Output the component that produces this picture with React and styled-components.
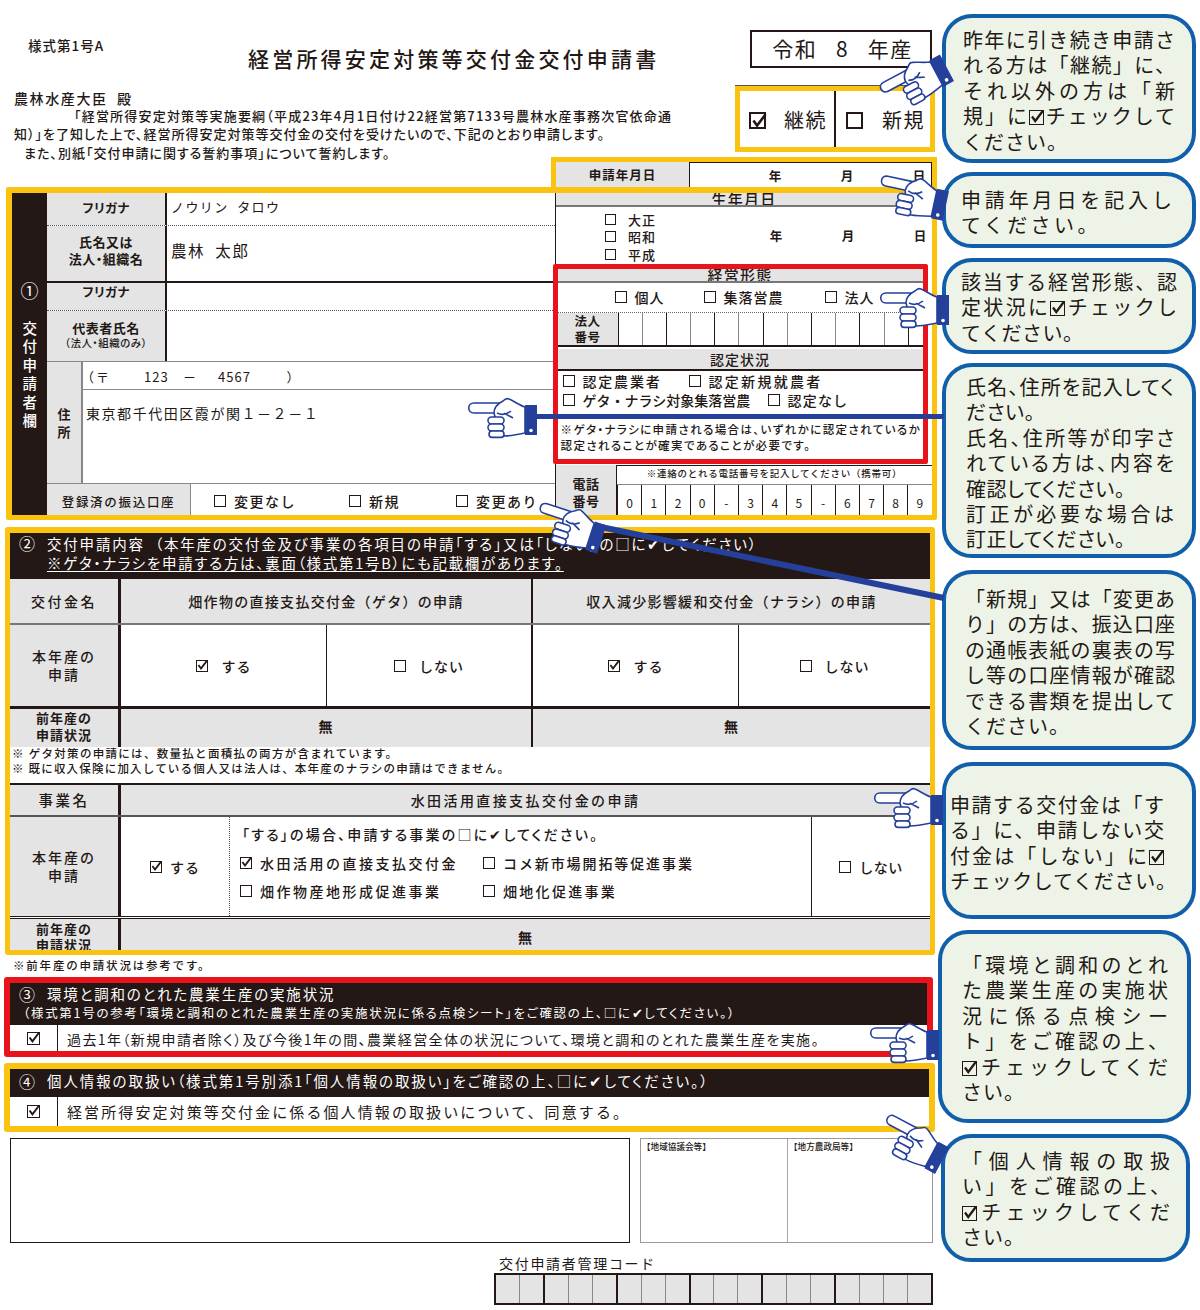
import React from 'react';
import styled, { createGlobalStyle } from 'styled-components';

const INK = '#231815';
const GRAY = '#e4e4e4';
const AMBER = '#f9c30f';
const RED = '#e9141b';
const NAVY = '#25409b';

const Global = createGlobalStyle`
  html, body { margin: 0; padding: 0; background: #fff; }
  #root { width: 1200px; height: 1310px; overflow: hidden; }
  * { box-sizing: border-box; }
`;

const Page = styled.div`
  position: relative;
  display: flex;
  width: 1200px;
  height: 1310px;
  color: ${INK};
  font-family: "Noto Sans CJK JP", "Liberation Sans", sans-serif;
  line-height: 1.2;
`;
const FormColumn = styled.div`
  width: 942px;
  flex: none;
  display: flex;
  flex-direction: column;
  align-items: flex-start;
  font-weight: 500;
`;
const CalloutColumn = styled.div`
  width: 258px;
  flex: none;
  display: flex;
  flex-direction: column;
  align-items: flex-start;
`;

/* ---------- callouts ---------- */
const Callout = styled.div`
  margin-top: ${p => p.$top}px;
  margin-left: ${p => p.$ml || 0}px;
  width: ${p => p.$w || 254}px;
  height: ${p => p.$h}px;
  padding: ${p => p.$pt}px 0 0 ${p => p.$pl}px;
  background: #edf4e7;
  border: 4px solid #115faa;
  border-radius: 30px;
  flex: none;
  font-size: 20px;
  font-feature-settings: ${p => (p.$palt ? '"palt"' : 'normal')};
`;
const L = styled.div`
  width: ${p => p.$w || 210}px;
  height: 25.4px;
  line-height: 25.4px;
  white-space: ${p => (p.$free ? 'nowrap' : 'normal')};
  text-align: justify;
  text-align-last: ${p => (p.$free ? 'left' : 'justify')};
  letter-spacing: ${p => (p.$free ? `${p.$ls ?? 1}px` : '0')};
`;

/* ---------- checkbox ---------- */
const BoxFrame = styled.span`
  position: relative;
  display: inline-block;
  flex: none;
  width: ${p => p.$s}px;
  height: ${p => p.$s}px;
  border: ${p => (p.$s > 16 ? 2 : 1.5)}px solid ${INK};
  vertical-align: -1px;
  background: ${p => (p.$clear ? 'transparent' : '#fff')};
`;
const Tick = styled.svg`
  position: absolute;
  left: -1px;
  top: -2px;
  overflow: visible;
`;
const Check = ({ on, s = 12, clear }) => (
  <BoxFrame $s={s} $clear={clear}>
    {on && (
      <Tick width={s} height={s} viewBox="0 0 12 12">
        <path d="M2.4 6 L5 9.6 L11 1.6" fill="none" stroke={INK} strokeWidth="1.8" />
      </Tick>
    )}
  </BoxFrame>
);
const Opt = styled.span`
  display: inline-flex;
  align-items: center;
  flex: none;
  width: ${p => (p.$w ? `${p.$w}px` : 'auto')};
  gap: ${p => p.$gap || 8}px;
  font-size: ${p => p.$fs || 14}px;
  letter-spacing: ${p => p.$ls ?? 1}px;
  white-space: nowrap;
`;

/* ---------- top of the form ---------- */
const TopRow = styled.div`
  display: flex;
  height: 157px;
  width: 942px;
  flex: none;
`;
const Intro = styled.div`
  width: 735px;
  flex: none;
  display: flex;
  flex-direction: column;
`;
const FormNo = styled.div`
  margin: 37px 0 0 28px;
  height: 16px;
  line-height: 16px;
  font-size: 13.5px;
  letter-spacing: 1px;
`;
const Title = styled.h1`
  margin: -8px 0 0 248px;
  height: 28px;
  line-height: 26px;
  font-size: 21px;
  font-weight: 500;
  letter-spacing: 3.2px;
  white-space: nowrap;
`;
const Addressee = styled.div`
  margin: 18px 0 0 14px;
  height: 18px;
  line-height: 18px;
  font-size: 14px;
  letter-spacing: 1.6px;
  white-space: pre;
`;
const IntroLine = styled.div`
  padding-left: ${p => p.$pl}px;
  height: ${p => p.$h || 18}px;
  line-height: ${p => p.$h || 18}px;
  font-size: 13px;
  letter-spacing: ${p => p.$ls}px;
  white-space: nowrap;
  font-feature-settings: "palt";
`;
const TopRight = styled.div`
  width: 207px;
  flex: none;
  display: flex;
  flex-direction: column;
`;
const YearBox = styled.div`
  margin: 30px 0 0 15px;
  width: 182px;
  height: 38px;
  border: 2px solid ${INK};
  padding-left: 3px;
  display: flex;
  align-items: center;
  justify-content: center;
  font-size: 21px;
  font-weight: 400;
  letter-spacing: 1.5px;
  white-space: pre;
`;
const ContinueFrame = styled.div`
  margin-top: 18px;
  width: 200px;
  height: 66px;
  border: 5px solid ${AMBER};
  box-shadow: 0 -1px 0 #555;
  display: flex;
`;
const ContinueCell = styled.div`
  display: flex;
  align-items: center;
  flex: none;
  width: ${p => p.$w}px;
  padding: 2px 0 0 ${p => p.$pl}px;
  gap: ${p => p.$gap}px;
  border-left: ${p => (p.$rule ? `2px solid ${INK}` : 'none')};
  font-size: 20px;
  font-weight: 400;
  letter-spacing: 1.5px;
`;
const DateFrame = styled.div`
  position: relative;
  z-index: 2;
  margin: 0 0 -6px 551px;
  width: 386px;
  height: 36px;
  flex: none;
  border: 5px solid ${AMBER};
  border-bottom-width: 6px;
  display: flex;
`;
const DateLabel = styled.div`
  width: 134px;
  flex: none;
  background: ${GRAY};
  border-right: 1.5px solid ${INK};
  display: flex;
  align-items: center;
  justify-content: center;
  font-size: 12.5px;
  font-weight: 700;
  letter-spacing: 1px;
`;
const Ymd = styled.div`
  display: flex;
  flex: 1 1 0;
  min-width: 0;
  align-items: center;
  padding-left: ${p => p.$pl}px;
  font-size: 12.5px;
  font-weight: 700;
`;
const DateFields = styled(Ymd)`
  border-top: 1.5px solid ${INK};
  border-right: 1.5px solid ${INK};
`;
const YmdPart = styled.span`
  width: 72px;
  flex: none;
  text-align: center;
`;
const YmdParts = () => (
  <>
    <YmdPart>年</YmdPart>
    <YmdPart>月</YmdPart>
    <YmdPart>日</YmdPart>
  </>
);

/* ---------- section frames ---------- */
const ApplicantFrame = styled.section`
  margin-left: 6px;
  width: 931px;
  height: 333px;
  flex: none;
  border: 5px solid ${AMBER};
  border-top-width: 6px;
  border-left-width: 6px;
  border-radius: 2px;
  display: flex;
`;
const Spine = styled.div`
  width: 35px;
  flex: none;
  background: ${INK};
  color: #fff;
  display: flex;
  flex-direction: column;
  align-items: center;
  justify-content: center;
  gap: 20px;
  padding-top: 4px;
`;
const SpineNo = styled.div`
  font-size: 18px;
  font-weight: 400;
`;
const SpineText = styled.div`
  writing-mode: vertical-rl;
  font-size: 14.5px;
  font-weight: 500;
  letter-spacing: 4px;
`;
const LeftBlock = styled.div`
  width: 508px;
  flex: none;
  display: flex;
  flex-direction: column;
`;
const NameRow = styled.div`
  display: flex;
  height: ${p => p.$h}px;
  flex: none;
  border-bottom: ${p =>
    p.$line === 'dash' ? '1px dotted #555' : p.$line === 'solid' ? `2px solid ${INK}` : '1.5px solid #888'};
`;
const NameLabel = styled.div`
  width: 120px;
  flex: none;
  background: ${GRAY};
  border-right: 2px solid ${INK};
  display: flex;
  flex-direction: column;
  align-items: center;
  justify-content: center;
  padding-bottom: ${p => p.$pb || 0}px;
  text-align: center;
  font-size: ${p => p.$fs || 12.5}px;
  line-height: 17px;
  font-weight: 700;
  letter-spacing: 0.5px;
  font-feature-settings: "palt";
`;
const NameSub = styled.span`
  font-size: 10.5px;
  line-height: 14px;
  font-weight: 500;
  white-space: nowrap;
`;
const NameValue = styled.div`
  flex: 1;
  display: flex;
  align-items: center;
  padding: 0 0 ${p => p.$pb || 0}px 4px;
  white-space: pre;
  font-size: ${p => p.$fs}px;
  font-weight: 400;
  letter-spacing: ${p => p.$ls || 0}px;
`;
const AddressRow = styled.div`
  display: flex;
  height: 122px;
  flex: none;
  border-bottom: 1.5px solid #888;
`;
const AddressLabel = styled.div`
  width: 36px;
  flex: none;
  background: ${GRAY};
  border-right: 2px solid #888;
  display: flex;
  flex-direction: column;
  align-items: center;
  justify-content: center;
  font-size: 13px;
  line-height: 18px;
  font-weight: 700;
`;
const AddressBody = styled.div`
  flex: 1;
  display: flex;
  flex-direction: column;
`;
const Postal = styled.div`
  height: 28px;
  flex: none;
  border-bottom: 1.5px solid #888;
  padding: 2px 0 0 4px;
  display: flex;
  align-items: center;
  font-size: 13px;
  font-weight: 400;
  letter-spacing: 1px;
  font-feature-settings: "palt";
`;
const PostalPart = styled.span`
  width: ${p => p.$w}px;
  flex: none;
`;
const AddressText = styled.div`
  padding: 12px 0 0 3px;
  font-size: 14px;
  font-weight: 400;
  letter-spacing: 1.55px;
  line-height: 22px;
`;
const BankRow = styled.div`
  display: flex;
  flex: 1;
`;
const BankLabel = styled.div`
  width: 144px;
  flex: none;
  background: ${GRAY};
  display: flex;
  align-items: center;
  justify-content: center;
  padding-top: 4px;
  font-size: 12.5px;
  letter-spacing: 1.7px;
  border-right: 1px solid #888;
`;
const OptionRow = styled.div`
  display: flex;
  align-items: center;
  padding: ${p => p.$pad || 0}px 0 0 ${p => p.$pl || 0}px;
  height: ${p => (p.$h ? `${p.$h}px` : 'auto')};
  flex: ${p => (p.$h ? 'none' : '1')};
`;

const RightBlock = styled.div`
  width: 377px;
  flex: none;
  display: flex;
  flex-direction: column;
  border-left: 1.5px solid ${INK};
`;
const ClippedHeading = styled.div`
  height: ${p => p.$h}px;
  flex: none;
  overflow: hidden;
  background: ${GRAY};
  border-bottom: 2px solid #777;
  text-align: center;
  font-size: 15px;
  font-weight: 500;
  line-height: ${p => p.$h - 3}px;
  letter-spacing: 1.2px;
`;
const EraRow = styled.div`
  display: flex;
  height: 57px;
  flex: none;
`;
const EraList = styled.div`
  width: 134px;
  flex: none;
  padding: 4px 0 0 49px;
  display: flex;
  flex-direction: column;
`;
const EraItem = styled.div`
  display: flex;
  align-items: center;
  gap: 12px;
  height: ${p => p.$h}px;
  font-size: 13px;
  letter-spacing: 1px;
`;
const StatusFrame = styled.div`
  margin-left: -3.5px;
  width: 375px;
  height: 200px;
  flex: none;
  border: 5px solid ${RED};
  border-radius: 2px;
  display: flex;
  flex-direction: column;
  background: #fff;
`;
const NumberRow = styled.div`
  display: flex;
  height: 35px;
  flex: none;
  border-bottom: 2px solid ${INK};
  border-top: 1px dotted #666;
`;
const SmallLabel = styled.div`
  width: ${p => p.$w}px;
  flex: none;
  background: ${GRAY};
  display: flex;
  flex-direction: column;
  align-items: center;
  justify-content: center;
  padding-top: ${p => p.$pt || 0}px;
  font-size: ${p => p.$fs}px;
  line-height: ${p => p.$lh}px;
  font-weight: 700;
  letter-spacing: 0.6px;
`;
const Digit = styled.div`
  width: ${p => p.$w}px;
  flex: none;
  border-left: ${p => p.$lw || 1.5}px solid ${p => p.$tone || INK};
  display: flex;
  align-items: center;
  justify-content: center;
  padding-top: ${p => p.$pt || 0}px;
  font-size: 12px;
  font-weight: 400;
`;
const HeadingGap = styled.div`
  margin-top: 2px;
  height: 22px;
  flex: none;
  background: ${GRAY};
  border-bottom: 2px solid ${INK};
  text-align: center;
  font-size: 14px;
  font-weight: 500;
  line-height: 21px;
  letter-spacing: 1px;
`;
const StatusOptions = styled.div`
  padding: 1px 0 0 5px;
  display: flex;
  flex-direction: column;
`;
const StatusNote = styled.div`
  margin-top: 12px;
  padding-left: 3px;
  font-size: 11.5px;
  line-height: 16px;
  letter-spacing: ${p => p.$ls}px;
  white-space: nowrap;
  font-feature-settings: "palt";
`;
const PhoneRow = styled.div`
  display: flex;
  flex: 1;
  margin-top: 1px;
`;
const PhoneBody = styled.div`
  flex: 1;
  display: flex;
  flex-direction: column;
  border-left: 1px solid ${INK};
`;
const PhoneNote = styled.div`
  height: 20px;
  flex: none;
  text-align: center;
  font-size: 9.5px;
  line-height: 14px;
  border-bottom: 1.5px solid #888;
  border-top: 1.5px solid ${INK};
  letter-spacing: 0.75px;
`;
const PhoneDigits = styled.div`
  flex: 1;
  display: flex;
`;

/* ---------- section 2 ---------- */
const ApplyFrame = styled.section`
  margin: 7px 0 0 5px;
  width: 930px;
  height: 428px;
  flex: none;
  border: 5px solid ${AMBER};
  border-top-width: 6px;
  border-radius: 3px;
  display: flex;
  flex-direction: column;
  overflow: hidden;
`;
const Banner = styled.div`
  height: ${p => p.$h}px;
  flex: none;
  background: ${INK};
  color: #fff;
  display: flex;
  flex-direction: column;
  justify-content: center;
  padding: 0 0 ${p => p.$pb ?? 3}px ${p => p.$pl || 9}px;
  font-weight: 400;
`;
const BannerLine = styled.div`
  display: flex;
  align-items: center;
  padding-left: ${p => p.$pl || 0}px;
  font-size: ${p => p.$fs || 14}px;
  line-height: ${p => p.$lh || 19}px;
  letter-spacing: ${p => p.$ls ?? 0.6}px;
  white-space: pre;
  font-feature-settings: "palt";
  text-decoration: ${p => (p.$under ? 'underline' : 'none')};
  text-underline-offset: 2px;
`;
const BannerNo = styled.span`
  width: 28px;
  flex: none;
  font-size: 16px;
  letter-spacing: 0;
`;
const Row = styled.div`
  display: grid;
  grid-template-columns: ${p => p.$cols};
  height: ${p => (p.$h ? `${p.$h}px` : 'auto')};
  flex: ${p => (p.$h ? 'none' : '1')};
  border-bottom: ${p => p.$bb || 'none'};
`;
const Cell = styled.div`
  grid-column: span ${p => p.$span || 1};
  background: ${p => (p.$gray ? GRAY : '#fff')};
  border-left: ${p => p.$left || 'none'};
  display: flex;
  align-items: center;
  justify-content: center;
  text-align: center;
  flex-direction: ${p => (p.$stack ? 'column' : 'row')};
  padding-bottom: ${p => p.$pb || 0}px;
  padding-top: ${p => p.$pt || 0}px;
  font-size: ${p => p.$fs || 14}px;
  font-weight: ${p => p.$fw || 500};
  letter-spacing: ${p => p.$ls ?? 1}px;
  line-height: ${p => p.$lh || 18}px;
  white-space: nowrap;
`;
const Notes = styled.div`
  height: 39px;
  flex: none;
  border-bottom: 2px solid ${INK};
  padding: 0 0 0 2px;
  font-size: 11.5px;
  line-height: 15px;
`;
const NoteLine = styled.div`
  letter-spacing: ${p => p.$ls}px;
  white-space: pre;
`;
const ListCell = styled.div`
  border-left: 1px dotted #555;
  padding: 7px 0 0 10px;
`;
const ListLead = styled.div`
  padding-left: 2px;
  font-size: 14px;
  line-height: 20px;
  letter-spacing: 2.2px;
  white-space: nowrap;
  font-feature-settings: "palt";
`;
const ListGrid = styled.div`
  margin-top: 5px;
  display: grid;
  grid-template-columns: 243px 300px;
  grid-auto-rows: 28px;
  align-items: center;
`;
const OutsideNote = styled.div`
  margin: 1px 0 0 13px;
  height: 21px;
  line-height: 14px;
  padding-top: 2px;
  font-size: 11.5px;
  letter-spacing: 1.8px;
`;

/* ---------- sections 3 and 4 ---------- */
const ConfirmFrame = styled.section`
  margin: ${p => p.$top}px 0 0 4px;
  width: ${p => p.$w}px;
  height: ${p => p.$h}px;
  flex: none;
  border: 6px solid ${p => p.$tone};
  border-radius: 3px;
  display: flex;
  flex-direction: column;
  overflow: hidden;
`;
const ConfirmRow = styled.div`
  flex: 1;
  display: flex;
  align-items: center;
  background: #fff;
`;
const ConfirmCheck = styled.div`
  width: 48px;
  align-self: stretch;
  flex: none;
  display: flex;
  align-items: center;
  justify-content: center;
  border-right: 1.5px solid ${INK};
`;
const ConfirmText = styled.div`
  padding: ${p => p.$pt || 0}px 0 0 ${p => p.$pl}px;
  font-size: ${p => p.$fs}px;
  font-weight: 400;
  letter-spacing: ${p => p.$ls}px;
  white-space: nowrap;
  font-feature-settings: ${p => (p.$palt ? '"palt"' : 'normal')};
`;

/* ---------- bottom ---------- */
const BottomRow = styled.div`
  margin: 6px 0 0 10px;
  display: flex;
  gap: 10px;
  height: 105px;
  flex: none;
`;
const MemoBox = styled.div`
  width: 620px;
  border: 1.5px solid ${INK};
`;
const OfficeBox = styled.div`
  width: 293px;
  border: 1.5px solid #999;
  display: flex;
`;
const OfficeCell = styled.div`
  width: ${p => p.$w}px;
  flex: none;
  border-left: ${p => (p.$rule ? '1px solid #aaa' : 'none')};
  padding: 1px 0 0 1px;
  font-size: 8.6px;
  line-height: 12px;
  white-space: nowrap;
`;
const CodeLabel = styled.div`
  margin: 12px 0 0 499px;
  height: 18px;
  line-height: 16px;
  font-size: 14px;
  font-weight: 400;
  letter-spacing: 1.7px;
  white-space: nowrap;
`;
const CodeGrid = styled.div`
  margin-left: 494px;
  width: 439px;
  height: 32px;
  flex: none;
  display: flex;
  border: 2px solid ${INK};
  background: ${GRAY};
`;
const CodeCell = styled.div`
  flex: 1;
  border-left: ${p => (p.$first ? 'none' : p.$major ? `2px solid ${INK}` : '1px solid #888')};
`;

/* ---------- overlays ---------- */
const Leaders = styled.svg`
  position: absolute;
  left: 0;
  top: 0;
  pointer-events: none;
  z-index: 5;
`;
const HandSvg = styled.svg`
  position: absolute;
  width: 70px;
  height: 40px;
  overflow: visible;
  pointer-events: none;
  z-index: 6;
`;
const Hand = ({ tx, ty, a = 0 }) => {
  const r = (a * Math.PI) / 180;
  const dx = -35, dy = -10;
  const rx = dx * Math.cos(r) - dy * Math.sin(r);
  const ry = dx * Math.sin(r) + dy * Math.cos(r);
  const cx = tx - rx, cy = ty - ry;
  return (
    <HandSvg
      viewBox="0 0 70 40"
      style={{ left: cx - 35, top: cy - 20, transform: `rotate(${a}deg)` }}
    >
      <g fill="#fff" stroke={NAVY} strokeWidth="1.6" strokeLinejoin="round">
        <path d="M34 5 L6 5 C-1 5 -1 15 6 15 L30 15 Z" />
        <path d="M26 15 C26 9 31 5 35 3 C37 1 39 0 41 1 C46 3 51 7 57 9 L57 35 C50 36.5 43 38 36 38 L30 30 Z" />
        <rect x="20" y="19" width="16" height="7" rx="3.4" />
        <rect x="20" y="26" width="16" height="7" rx="3.4" />
        <rect x="21" y="33" width="15" height="6.4" rx="3.2" />
        <path d="M29 15 C33 17 38 17 43 13 M36 15 C38 17 42 18 45 20" fill="none" />
      </g>
      <rect x="57" y="7" width="12" height="30" fill={NAVY} />
      <circle cx="63" cy="32.5" r="1.8" fill="#fff" />
    </HandSvg>
  );
};

const SIX = '108px 208px 205px 207px 1fr';
const leftHeavy = `3px solid ${INK}`;
const leftMid = `2.5px solid ${INK}`;
const leftThin = `1.5px solid ${INK}`;

const numberDigits = Array.from({ length: 13 });
const phoneDigits = ['0', '1', '2', '0', '-', '3', '4', '5', '-', '6', '7', '8', '9'];
const codeGroups = [2, 3, 3, 3, 3, 4];

export default function App() {
  return (
    <Page>
      <Global />
      <FormColumn>
        <TopRow>
          <Intro>
            <FormNo>様式第1号A</FormNo>
            <Title>経営所得安定対策等交付金交付申請書</Title>
            <Addressee>農林水産大臣  殿</Addressee>
            <IntroLine $pl={74} $ls={1.2}>「経営所得安定対策等実施要綱（平成23年4月1日付け22経営第7133号農林水産事務次官依命通</IntroLine>
            <IntroLine $pl={14} $ls={1}>知）」を了知した上で、経営所得安定対策等交付金の交付を受けたいので、下記のとおり申請します。</IntroLine>
            <IntroLine $pl={24} $ls={1} $h={19}>また、別紙「交付申請に関する誓約事項」について誓約します。</IntroLine>
          </Intro>
          <TopRight>
            <YearBox>令和   8   年産</YearBox>
            <ContinueFrame>
              <ContinueCell $w={94} $pl={9} $gap={18}><Check on s={17} />継続</ContinueCell>
              <ContinueCell $w={96} $rule $pl={10} $gap={19}><Check s={17} />新規</ContinueCell>
            </ContinueFrame>
          </TopRight>
        </TopRow>

        <DateFrame>
          <DateLabel>申請年月日</DateLabel>
          <DateFields $pl={49}><YmdParts /></DateFields>
        </DateFrame>

        <ApplicantFrame>
          <Spine>
            <SpineNo>①</SpineNo>
            <SpineText>交付申請者欄</SpineText>
          </Spine>
          <LeftBlock>
            <NameRow $h={33} $line="dash">
              <NameLabel $pb={4}>フリガナ</NameLabel>
              <NameValue $fs={13} $ls={1.4} $pb={4}>ノウリン  タロウ</NameValue>
            </NameRow>
            <NameRow $h={57} $line="solid">
              <NameLabel $fs={13} $pb={7}>氏名又は<br />法人・組織名</NameLabel>
              <NameValue $fs={15.5} $ls={1.6} $pb={7}>農林  太郎</NameValue>
            </NameRow>
            <NameRow $h={28} $line="dash">
              <NameLabel $pb={11}>フリガナ</NameLabel>
              <NameValue $fs={13} />
            </NameRow>
            <NameRow $h={51} $line="gray">
              <NameLabel $fs={13} $pb={4}>代表者氏名<NameSub>（法人・組織のみ）</NameSub></NameLabel>
              <NameValue $fs={13} />
            </NameRow>
            <AddressRow>
              <AddressLabel>住<br />所</AddressLabel>
              <AddressBody>
                <Postal>
                  <PostalPart $w={10}>（</PostalPart>
                  <PostalPart $w={47}>〒</PostalPart>
                  <PostalPart $w={39}>123</PostalPart>
                  <PostalPart $w={35}>－</PostalPart>
                  <PostalPart $w={69}>4567</PostalPart>
                  <PostalPart $w={14}>）</PostalPart>
                </Postal>
                <AddressText>東京都千代田区霞が関１－２－１</AddressText>
              </AddressBody>
            </AddressRow>
            <BankRow>
              <BankLabel>登録済の振込口座</BankLabel>
              <OptionRow $pl={23} $pad={4}>
                <Opt $w={135} $ls={1.5}><Check />変更なし</Opt>
                <Opt $w={107} $ls={1.5}><Check />新規</Opt>
                <Opt $ls={1.5}><Check />変更あり</Opt>
              </OptionRow>
            </BankRow>
          </LeftBlock>
          <RightBlock>
            <ClippedHeading $h={14}>生年月日</ClippedHeading>
            <EraRow>
              <EraList>
                <EraItem $h={17}><Check s={11} />大正</EraItem>
                <EraItem $h={18}><Check s={11} />昭和</EraItem>
                <EraItem $h={19}><Check s={11} />平成</EraItem>
              </EraList>
              <Ymd $pl={50}><YmdParts /></Ymd>
            </EraRow>
            <StatusFrame>
              <ClippedHeading $h={14}>経営形態</ClippedHeading>
              <OptionRow $h={29} $pl={57}>
                <Opt $w={89}><Check />個人</Opt>
                <Opt $w={121}><Check />集落営農</Opt>
                <Opt><Check />法人</Opt>
              </OptionRow>
              <NumberRow>
                <SmallLabel $w={60} $fs={12.5} $lh={16}>法人<br />番号</SmallLabel>
                {numberDigits.map((_, i) => (
                  <Digit key={i} $w={24.2} $lw={i % 2 === 0 ? 1.5 : 1} $tone={i % 2 === 0 ? INK : '#888'} />
                ))}
              </NumberRow>
              <HeadingGap>認定状況</HeadingGap>
              <StatusOptions>
                <OptionRow $h={19}>
                  <Opt $w={126} $ls={1.8}><Check />認定農業者</Opt>
                  <Opt $ls={2.3}><Check />認定新規就農者</Opt>
                </OptionRow>
                <OptionRow $h={18}>
                  <Opt $w={205} $ls={0}><Check />ゲタ・ナラシ対象集落営農</Opt>
                  <Opt $ls={1.2}><Check />認定なし</Opt>
                </OptionRow>
              </StatusOptions>
              <StatusNote $ls={1.4}>※ゲタ・ナラシに申請される場合は、いずれかに認定されているか<br />認定されることが確実であることが必要です。</StatusNote>
            </StatusFrame>
            <PhoneRow>
              <SmallLabel $w={60} $fs={13} $lh={17} $pt={4}>電話<br />番号</SmallLabel>
              <PhoneBody>
                <PhoneNote>※連絡のとれる電話番号を記入してください（携帯可）</PhoneNote>
                <PhoneDigits>
                  {phoneDigits.map((d, i) => (
                    <Digit key={i} $w={24.2} $pt={6} $lw={i === 0 ? 0.1 : 1.5}>{d}</Digit>
                  ))}
                </PhoneDigits>
              </PhoneBody>
            </PhoneRow>
          </RightBlock>
        </ApplicantFrame>

        <ApplyFrame>
          <Banner $h={46} $pb={6}>
            <BannerLine $fs={14.5} $ls={1.8}><BannerNo>②</BannerNo>交付申請内容  （本年産の交付金及び事業の各項目の申請「する」又は「しない」の□に✔してください）</BannerLine>
            <BannerLine $pl={28} $under $fs={14.5} $ls={1.7}>※ゲタ・ナラシを申請する方は、裏面（様式第1号B）にも記載欄があります。</BannerLine>
          </Banner>
          <Row $cols={SIX} $h={46} $bb="2px solid #777">
            <Cell $gray $ls={2.5}>交付金名</Cell>
            <Cell $gray $span={2} $left={leftHeavy} $ls={1.3}>畑作物の直接支払交付金（ゲタ）の申請</Cell>
            <Cell $gray $span={2} $left={leftMid} $ls={1.3}>収入減少影響緩和交付金（ナラシ）の申請</Cell>
          </Row>
          <Row $cols={SIX} $h={84} $bb={`3px solid ${INK}`}>
            <Cell $gray $stack $ls={2} $pb={2}>本年産の<br />申請</Cell>
            <Cell $left={leftHeavy}><Opt $gap={14}><Check on />する</Opt></Cell>
            <Cell $left={leftThin}><Opt $gap={13}><Check />しない</Opt></Cell>
            <Cell $left={leftMid}><Opt $gap={14}><Check on />する</Opt></Cell>
            <Cell $left={leftThin}><Opt $gap={13}><Check />しない</Opt></Cell>
          </Row>
          <Row $cols={SIX} $h={37} $bb={`2px solid ${INK}`}>
            <Cell $gray $stack $fs={13} $lh={17} $fw={700} $ls={1} $pb={4}>前年産の<br />申請状況</Cell>
            <Cell $gray $span={2} $left={leftHeavy} $fw={700} $pb={5}>無</Cell>
            <Cell $gray $span={2} $left={leftMid} $fw={700} $pb={5}>無</Cell>
          </Row>
          <Notes>
            <NoteLine $ls={1.3}>※ ゲタ対策の申請には、数量払と面積払の両方が含まれています。</NoteLine>
            <NoteLine $ls={1.2}>※ 既に収入保険に加入している個人又は法人は、本年産のナラシの申請はできません。</NoteLine>
          </Notes>
          <Row $cols="108px 1fr" $h={32} $bb="2px solid #555">
            <Cell $gray $ls={2.5} $fs={14.5}>事業名</Cell>
            <Cell $gray $left={leftHeavy} $ls={2.4}>水田活用直接支払交付金の申請</Cell>
          </Row>
          <Row $cols="108px 111px 582px 1fr" $h={102} $bb={`3px double ${INK}`}>
            <Cell $gray $stack $ls={2} $pb={2}>本年産の<br />申請</Cell>
            <Cell $left={leftHeavy}><Opt $gap={8}><Check on />する</Opt></Cell>
            <ListCell>
              <ListLead>「する」の場合、申請する事業の□に✔してください。</ListLead>
              <ListGrid>
                <Opt $ls={2.5}><Check on />水田活用の直接支払交付金</Opt>
                <Opt $ls={1.9}><Check />コメ新市場開拓等促進事業</Opt>
                <Opt $ls={2.5}><Check />畑作物産地形成促進事業</Opt>
                <Opt $ls={2.3}><Check />畑地化促進事業</Opt>
              </ListGrid>
            </ListCell>
            <Cell $left={leftThin}><Opt $gap={8} $ls={0.5}><Check />しない</Opt></Cell>
          </Row>
          <Row $cols="108px 1fr">
            <Cell $gray $stack $fs={13} $lh={16} $fw={700} $ls={1} $pt={2}>前年産の<br />申請状況</Cell>
            <Cell $gray $left={leftHeavy} $fw={700} $pt={2}>無</Cell>
          </Row>
        </ApplyFrame>
        <OutsideNote>※前年産の申請状況は参考です。</OutsideNote>

        <ConfirmFrame $top={0} $w={929} $h={80} $tone={RED}>
          <Banner $h={42}>
            <BannerLine $fs={14.5} $lh={20} $ls={1.8}><BannerNo>③</BannerNo>環境と調和のとれた農業生産の実施状況</BannerLine>
            <BannerLine $pl={4} $fs={12.5} $lh={17} $ls={1.7}>（様式第1号の参考「環境と調和のとれた農業生産の実施状況に係る点検シート」をご確認の上、□に✔してください。）</BannerLine>
          </Banner>
          <ConfirmRow>
            <ConfirmCheck><Check on s={13} clear /></ConfirmCheck>
            <ConfirmText $pl={9} $fs={14} $ls={1.4} $pt={3} $palt>過去1年（新規申請者除く）及び今後1年の間、農業経営全体の状況について、環境と調和のとれた農業生産を実施。</ConfirmText>
          </ConfirmRow>
        </ConfirmFrame>

        <ConfirmFrame $top={6} $w={931} $h={69} $tone={AMBER}>
          <Banner $h={28} $pb={4}>
            <BannerLine $fs={14.5} $lh={20} $ls={1.9}><BannerNo>④</BannerNo>個人情報の取扱い（様式第1号別添1「個人情報の取扱い」をご確認の上、□に✔してください。）</BannerLine>
          </Banner>
          <ConfirmRow>
            <ConfirmCheck><Check on s={13} clear /></ConfirmCheck>
            <ConfirmText $pl={9} $fs={15} $ls={2.1} $pt={1}>経営所得安定対策等交付金に係る個人情報の取扱いについて、同意する。</ConfirmText>
          </ConfirmRow>
        </ConfirmFrame>

        <BottomRow>
          <MemoBox />
          <OfficeBox>
            <OfficeCell $w={146}>【地域協議会等】</OfficeCell>
            <OfficeCell $w={144} $rule>【地方農政局等】</OfficeCell>
          </OfficeBox>
        </BottomRow>
        <CodeLabel>交付申請者管理コード</CodeLabel>
        <CodeGrid>
          {codeGroups.map((n, g) =>
            Array.from({ length: n }).map((_, i) => (
              <CodeCell key={`${g}-${i}`} $first={g === 0 && i === 0} $major={i === 0} />
            ))
          )}
        </CodeGrid>
      </FormColumn>

      <CalloutColumn>
        <Callout $top={14} $h={149} $pt={9} $pl={17}>
          <L $w={212}>昨年に引き続き申請さ</L>
          <L $w={212}>れる方は「継続」に、</L>
          <L $w={212}>それ以外の方は「新</L>
          <L $w={212}>規」に<Check on s={15} clear />チェックして</L>
          <L $free>ください。</L>
        </Callout>
        <Callout $top={9} $h={76} $pt={11} $pl={15}>
          <L $w={211}>申請年月日を記入し</L>
          <L $free $ls={3.4}>てください。</L>
        </Callout>
        <Callout $top={10} $h={96} $pt={7} $pl={15}>
          <L $w={216}>該当する経営形態、認</L>
          <L $w={216}>定状況に<Check on s={15} clear />チェックし</L>
          <L $free $ls={0.5}>てください。</L>
        </Callout>
        <Callout $palt $top={9} $h={195} $pt={7} $pl={20}>
          <L $w={208}>氏名、住所を記入してく</L>
          <L $free $ls={0.5}>ださい。</L>
          <L $w={208}>氏名、住所等が印字さ</L>
          <L $w={208}>れている方は、内容を</L>
          <L $free $ls={0.5}>確認してください。</L>
          <L $w={208}>訂正が必要な場合は</L>
          <L $free $ls={0.5}>訂正してください。</L>
        </Callout>
        <Callout $top={12} $h={180} $pt={12} $pl={19}>
          <L $w={210}>「新規」又は「変更あ</L>
          <L $w={210}>り」の方は、振込口座</L>
          <L $w={210}>の通帳表紙の裏表の写</L>
          <L $w={210}>し等の口座情報が確認</L>
          <L $w={210}>できる書類を提出して</L>
          <L $free>ください。</L>
        </Callout>
        <Callout $top={12} $h={157} $pt={26} $pl={4}>
          <L $w={214}>申請する交付金は「す</L>
          <L $w={214}>る」に、申請しない交</L>
          <L $w={214}>付金は「しない」に<Check on s={15} clear /></L>
          <L $w={226}>チェックしてください。</L>
        </Callout>
        <Callout $top={11} $ml={-4} $w={253} $h={193} $pt={18} $pl={20}>
          <L $w={206}>「環境と調和のとれ</L>
          <L $w={206}>た農業生産の実施状</L>
          <L $w={206}>況に係る点検シー</L>
          <L $w={206}>ト」をご確認の上、</L>
          <L $w={206}><Check on s={15} clear />チェックしてくだ</L>
          <L $free>さい。</L>
        </Callout>
        <Callout $top={11} $ml={-1} $w={249} $h={128} $pt={10} $pl={17}>
          <L $w={208}>「個人情報の取扱</L>
          <L $w={208}>い」をご確認の上、</L>
          <L $w={208}><Check on s={15} clear />チェックしてくだ</L>
          <L $free>さい。</L>
        </Callout>
      </CalloutColumn>

      <Leaders width="1200" height="1310" viewBox="0 0 1200 1310">
        <line x1="530" y1="416.5" x2="944" y2="416.5" stroke={NAVY} strokeWidth="5" />
        <line x1="596" y1="526" x2="944" y2="598" stroke={NAVY} strokeWidth="6" />
      </Leaders>
      <Hand tx={880} ty={90} a={-28} />
      <Hand tx={881} ty={180} a={12} />
      <Hand tx={880} ty={298} a={0} />
      <Hand tx={468} ty={408} a={0} />
      <Hand tx={540} ty={507} a={18} />
      <Hand tx={874} ty={798} a={0} />
      <Hand tx={870} ty={1033} a={0} />
      <Hand tx={887} ty={1118} a={28} />
    </Page>
  );
}
